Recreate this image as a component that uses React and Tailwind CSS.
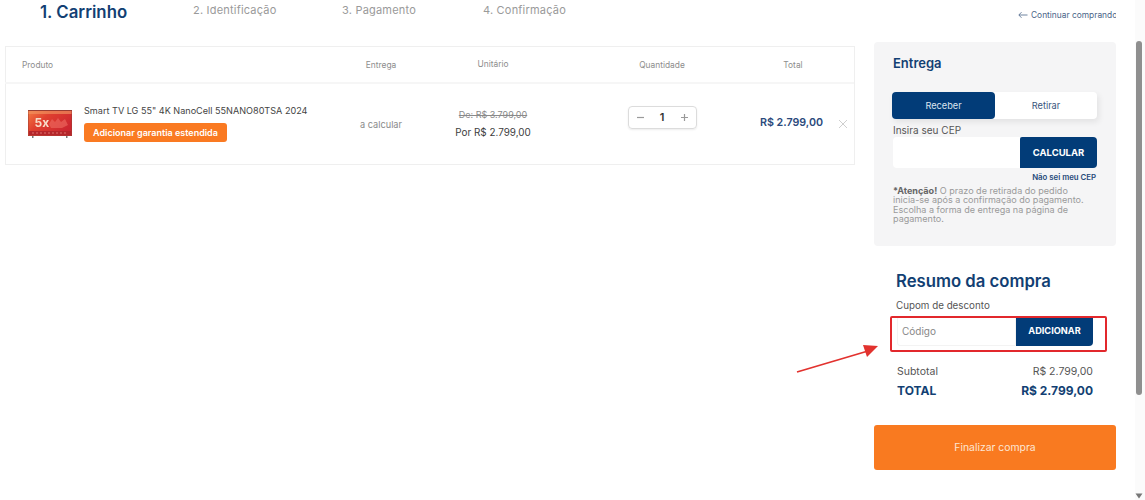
import React from "react";

const font = { fontFamily: '"Inter", "Liberation Sans", sans-serif' };

function TvThumb() {
  return (
    <svg width="46" height="30" viewBox="0 0 46 30" className="shrink-0 blur-[0.4px]">
      <defs>
        <linearGradient id="tv" x1="0" y1="0" x2="1" y2="0.6">
          <stop offset="0" stopColor="#f47a42" />
          <stop offset="0.4" stopColor="#e0402f" />
          <stop offset="1" stopColor="#cc2630" />
        </linearGradient>
      </defs>
      <rect x="1" y="1" width="44" height="26" fill="#9a3d32" />
      <rect x="1.5" y="2" width="43" height="24.5" fill="url(#tv)" />
      <path d="M1.5 2H44.5V5H1.5Z" fill="#f0925f" opacity="0.65" />
      <path d="M22 15 L25 10 L28 13 L31 9 L34 13 L38 10 L41 16 L35 19 L24 19 Z" fill="#ee6d62" opacity="0.6" />
      <rect x="2" y="22" width="42" height="4" fill="#b5262b" />
      <path d="M5 24H40" stroke="#e8877f" strokeWidth="0.8" strokeDasharray="2 2" />
      <text x="7.5" y="18" fontSize="12" fontWeight="700" fill="#f7dcc8" fontFamily="Inter, sans-serif">5x</text>
      <rect x="5" y="27" width="1.5" height="2" fill="#777" />
      <rect x="39" y="27" width="1.5" height="2" fill="#777" />
    </svg>
  );
}

function Table() {
  const grid = "grid grid-cols-[336px_80px_144px_194px_68px_28px]";
  return (
    <div className="ml-[5px] mt-[20px] w-[850px] h-[119px] border border-[#efefef]">
      <div className={`${grid} h-[37px] pt-[2px] items-center border-b-2 border-[#f6f6f6] text-[8.4px] text-[#8d8d8d] text-center -ml-px`}>
        <div className="pl-[17px] text-left">Produto</div>
        <div>Entrega</div>
        <div className="-mt-[2px]">Unitário</div>
        <div>Quantidade</div>
        <div>Total</div>
        <div />
      </div>
      <div className={`${grid} h-[80px] items-center text-center -ml-px`}>
        <div className="flex items-center pl-[22px] gap-[11px] text-left">
          <TvThumb />
          <div className="flex flex-col items-start gap-[5px] -mt-[2px]">
            <div className="text-[9.1px] leading-[14px] text-[#444] whitespace-nowrap">Smart TV LG 55" 4K NanoCell 55NANO80TSA 2024</div>
            <div className="h-[19px] w-[143px] rounded-[3px] bg-[#fa7a22] text-white text-[9px] font-semibold flex items-center justify-center whitespace-nowrap">Adicionar garantia estendida</div>
          </div>
        </div>
        <div className="text-[9.2px] text-[#8a8a8a] whitespace-nowrap pt-[2px]">a calcular</div>
        <div className="flex flex-col items-center gap-[3px] -mt-[2px]">
          <div className="text-[9px] leading-[14px] text-[#8a8a8a] line-through whitespace-nowrap">De: R$ 3.799,00</div>
          <div className="text-[9.9px] leading-[14px] text-[#3d3d3d] whitespace-nowrap">Por R$ 2.799,00</div>
        </div>
        <div className="flex justify-center -mt-[14px]">
          <div className="w-[69px] h-[23px] rounded-[4px] border border-[#dcdcdc] shadow-[0_1px_2px_rgba(0,0,0,0.08)] flex items-center justify-between px-[7px] text-[#9a9a9a]">
            <svg width="9" height="9" viewBox="0 0 9 9"><path d="M1 4.5H8" stroke="currentColor" strokeWidth="1.2" /></svg>
            <span className="text-[11px] font-semibold text-[#333]">1</span>
            <svg width="9" height="9" viewBox="0 0 9 9"><path d="M1 4.5H8M4.5 1V8" stroke="currentColor" strokeWidth="1.2" /></svg>
          </div>
        </div>
        <div className="text-[10.7px] font-semibold text-[#2b4a7c] whitespace-nowrap -mt-[1px] -ml-[3px]">R$ 2.799,00</div>
        <div className="flex justify-center pl-[4px]">
          <svg width="10" height="10" viewBox="0 0 10 10"><path d="M1 1L9 9M9 1L1 9" stroke="#c9c9c9" strokeWidth="0.9" /></svg>
        </div>
      </div>
    </div>
  );
}

function Delivery() {
  return (
    <div className="w-[242px] h-[204px] ml-[19px] rounded-[4px] bg-[#f5f5f6] pl-[18px] pr-[19px] pt-[13px]">
      <div className="text-[13px] leading-[16px] font-semibold text-[#123f73] ml-px">Entrega</div>
      <div className="mt-[21px] h-[27px] flex rounded-[4px] bg-white shadow-[2px_3px_6px_rgba(0,0,0,0.08)] text-[9.2px]">
        <div className="w-[103px] rounded-[4px] bg-[#023c78] text-[#dbe5f0] flex items-center justify-center">Receber</div>
        <div className="flex-1 text-[#39557c] flex items-center justify-center">Retirar</div>
      </div>
      <div className="text-[10px] leading-[12px] text-[#555] mt-[5px] ml-px">Insira seu CEP</div>
      <div className="flex h-[31px] mt-px ml-px">
        <div className="w-[127px] bg-white rounded-l-[4px]" />
        <div className="flex-1 bg-[#023c78] rounded-r-[4px] rounded-tl-[2px] text-white text-[9.5px] font-bold flex items-center justify-center pt-[2px]">CALCULAR</div>
      </div>
      <div className="text-right text-[7.8px] leading-[10px] mt-[3px] mr-px pt-px font-semibold text-[#264a7a]">Não sei meu CEP</div>
      <p className="mt-[4px] ml-px w-[200px] text-[9.05px] leading-[9.3px] text-[#9a9a9a]">
        <b className="font-bold text-[#666]">*Atenção!</b> O prazo de retirada do pedido inicia-se após a confirmação do pagamento. Escolha a forma de entrega na página de pagamento.
      </p>
    </div>
  );
}

function Summary() {
  return (
    <div className="ml-[42px] w-[197px] mt-[25px] relative">
      <div className="text-[16.7px] leading-[20px] font-semibold text-[#123f73] whitespace-nowrap -ml-px">Resumo da compra</div>
      <div className="text-[9.8px] leading-[14px] text-[#555] mt-[8px] -ml-px">Cupom de desconto</div>
      <div className="flex h-[30px] mt-[3px] w-[196px]">
        <div className="w-[119px] bg-white border border-[#f3f3f3] rounded-l-[3px] text-[10px] text-[#888] flex items-center pl-[4px]">Código</div>
        <div className="flex-1 bg-[#023c78] rounded-br-[4px] rounded-tr-[2px] text-white text-[9.2px] font-bold flex items-center justify-center">ADICIONAR</div>
      </div>
      <div className="flex justify-between mt-[19px] w-[196px] text-[10.5px] leading-[14px] text-[#555]">
        <span>Subtotal</span><span>R$ 2.799,00</span>
      </div>
      <div className="flex justify-between mt-[4px] w-[196px] text-[12px] leading-[16px] font-bold text-[#123f73]">
        <span>TOTAL</span><span>R$ 2.799,00</span>
      </div>
      <div className="absolute left-[-7px] top-[45px] w-[217px] h-[36px] border-2 border-[#e2282c] rounded-[2px]" />
    </div>
  );
}

export default function App() {
  return (
    <div style={font} className="relative w-[1145px] h-[500px] bg-white overflow-hidden flex">
      <div className="w-[855px] shrink-0">
        <div className="flex items-start h-[26px] text-[11px] leading-[20px] text-[#9a9a9a] tracking-[0.2px]">
          <div className="ml-[40px] w-[153px] pt-px text-[16.8px] leading-[22px] font-semibold text-[#123f73] tracking-normal">1. Carrinho</div>
          <div className="w-[149px]">2. Identificação</div>
          <div className="w-[141px]">3. Pagamento</div>
          <div>4. Confirmação</div>
        </div>
        <Table />
      </div>
      <div className="w-[261px] shrink-0">
        <div className="h-[42px] pt-[8px] flex items-start justify-end">
          <div className="w-[98px] overflow-hidden whitespace-nowrap text-[8.4px] leading-[14px] text-[#4a6488] flex items-center gap-[3px]">
            <svg width="10" height="8" viewBox="0 0 10 8" className="shrink-0"><path d="M9.5 4H1M3.5 1.2L.8 4l2.7 2.8" fill="none" stroke="#4a6488" strokeWidth="0.8" /></svg>
            <span>Continuar comprando</span>
          </div>
        </div>
        <Delivery />
        <Summary />
        <button className="block mt-[26px] ml-[19px] w-[242px] h-[45px] rounded-[3px] bg-[#f97a20] text-[#fde6d3] text-[10.4px] pt-px">Finalizar compra</button>
      </div>
      <div className="absolute right-0 top-0 w-[10px] h-[500px] bg-[#fbfbfb]">
        <div className="ml-[1px] mt-[41px] w-[6px] h-[354px] rounded-[3px] bg-[#8f8f8f]" />
        <svg width="8" height="6" viewBox="0 0 8 6" className="absolute left-0 top-[493px]"><path d="M0.5 0.5H7.5L4 5.5Z" fill="#777" /></svg>
      </div>
      <svg width="100" height="40" viewBox="0 0 100 40" className="absolute left-[790px] top-[340px]">
        <path d="M7 32 L78 11" stroke="#e2322e" strokeWidth="1.8" />
        <path d="M88 6 L73 5 L77 17 Z" fill="#e2322e" />
      </svg>
    </div>
  );
}
